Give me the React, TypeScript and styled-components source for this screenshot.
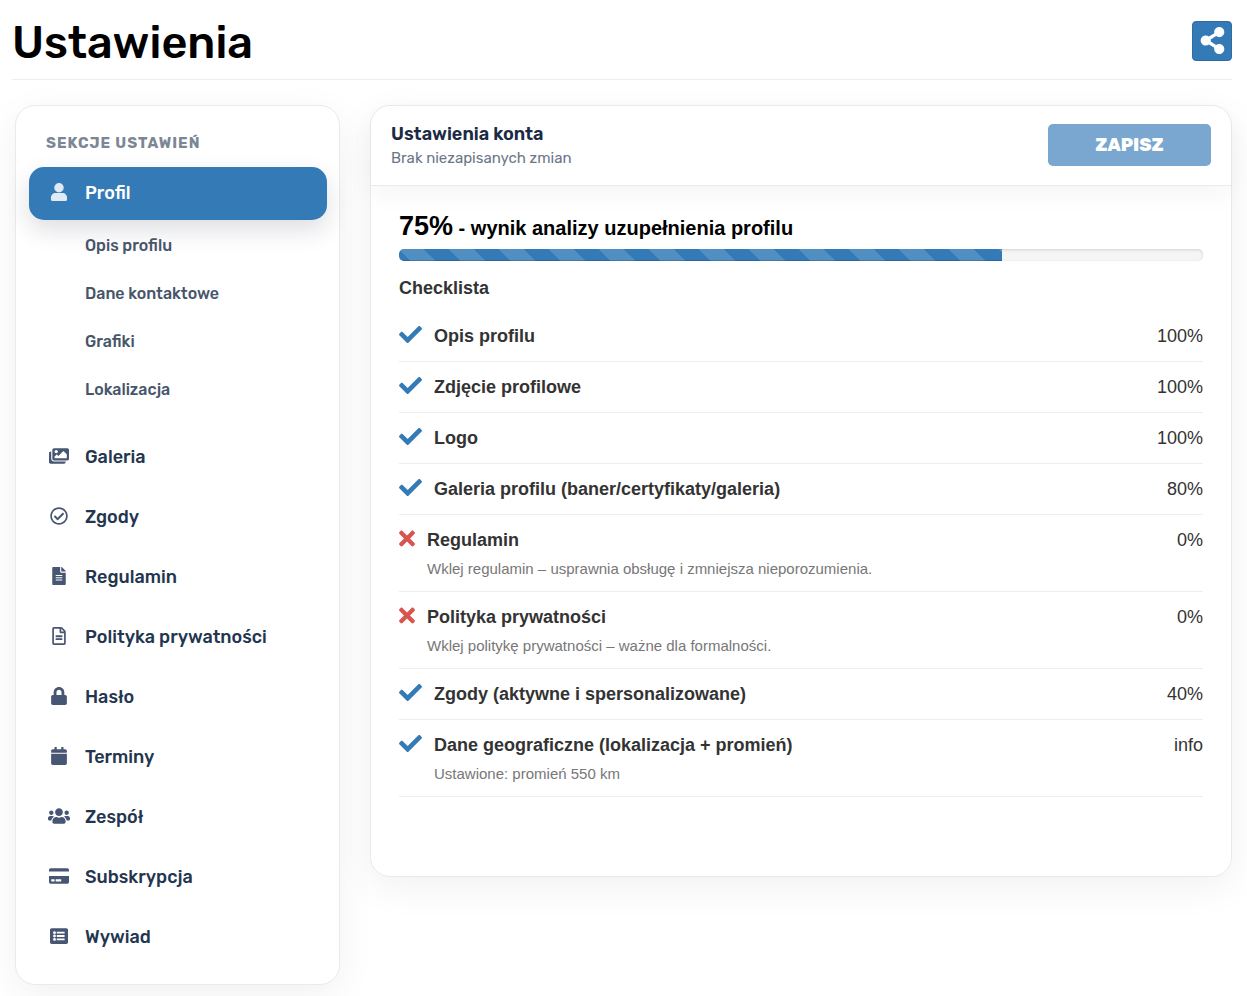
import React from "react";
import styled, { createGlobalStyle, css } from "styled-components";
import {
  FaImages, FaRegCheckCircle, FaFileAlt, FaRegFileAlt, FaLock,
  FaCalendar, FaUsers, FaCreditCard, FaListAlt, FaShareAlt, FaCheck, FaTimes,
} from "react-icons/fa";

const ui = `Rubik, Roboto, "Liberation Sans", sans-serif`;
const body = `"Liberation Sans", Arial, sans-serif`;
const blue = "#337ab7";

const GlobalStyle = createGlobalStyle`
  *, *::before, *::after { box-sizing: border-box; }
  body { margin: 0; background: #fff; color: #333; font-family: ${body}; font-size: 18px; }
  h1, h2, h3, h4, p, ul { margin: 0; padding: 0; }
  ul { list-style: none; }
`;

const Page = styled.div`
  padding: 0 15px 11px 12px;
`;

const PageHeader = styled.header`
  display: flex;
  align-items: center;
  justify-content: space-between;
  height: 80px;
  padding-top: 2px;
  border-bottom: 1px solid #eee;
`;

const Title = styled.h1`
  padding-top: 4px;
  font: 500 45px/52px ${ui};
  color: #000;
`;

const ShareButton = styled.button`
  display: flex;
  align-items: center;
  justify-content: center;
  width: 40px;
  height: 40px;
  padding: 0;
  border: 1px solid #2e6da4;
  border-radius: 4px;
  background: ${blue};
  color: #fff;
  font-size: 27px;
`;

const Columns = styled.div`
  display: grid;
  grid-template-columns: 325px minmax(0, 1fr);
  gap: 30px;
  align-items: start;
  padding: 25px 0 0 3px;
`;

const card = css`
  border: 1px solid #e8eaed;
  border-radius: 20px;
  background: #fff;
  box-shadow: 0 10px 38px rgba(15, 23, 42, 0.06);
`;

const Sidebar = styled.nav`
  ${card}
  padding: 25px 12px 20px 13px;
`;

const SidebarTitle = styled.h2`
  margin-bottom: 12px;
  padding-left: 17px;
  font: 700 15px/24px ${ui};
  letter-spacing: 1px;
  color: #7b8794;
`;

const NavList = styled.ul`
  display: flex;
  flex-direction: column;
  gap: 7px;
`;

const NavLink = styled.a<{ $active?: boolean }>`
  display: flex;
  align-items: center;
  gap: 15px;
  height: 53px;
  padding: 0 19px 2px;
  border-radius: 15px;
  font: 500 18px/24px ${ui};
  text-decoration: none;
  color: #24364f;
  ${({ $active }) =>
    $active &&
    css`
      background: ${blue};
      color: #fff;
      box-shadow: 0 10px 24px rgba(15, 23, 42, 0.14);
    `}
`;

const NavIcon = styled.span<{ $width: number; $active?: boolean }>`
  display: flex;
  justify-content: center;
  width: 22px;
  flex: none;
  padding-bottom: 1px;
  color: ${({ $active }) => ($active ? "#dfeaf5" : "#475672")};
  svg { height: 18px; width: ${({ $width }) => $width}px; flex: none; }
`;

const SubList = styled.ul`
  padding: 2px 0 10px 56px;
`;

const SubLink = styled.a`
  display: flex;
  align-items: center;
  height: 48px;
  font: 500 16px/24px ${ui};
  text-decoration: none;
  color: #475569;
`;

const Panel = styled.main`
  ${card}
`;

const PanelHeader = styled.div`
  display: flex;
  justify-content: space-between;
  align-items: center;
  gap: 20px;
  height: 80px;
  padding: 0 20px 2px;
  border-bottom: 1px solid #e8eaed;
  border-radius: 20px 20px 0 0;
  box-shadow: 0 10px 24px rgba(15, 23, 42, 0.04);
`;

const PanelHeading = styled.div`
  padding-top: 4px;
`;

const PanelTitle = styled.h2`
  font: 600 18px/24px ${ui};
  color: #1b2b45;
`;

const PanelStatus = styled.p`
  font: 400 15px/25px ${ui};
  color: #6b7787;
`;

const SaveButton = styled.button`
  width: 163px;
  height: 42px;
  border: 0;
  border-radius: 5px;
  background: #7aa7d0;
  color: #fff;
  font: 800 18px/24px ${ui};
`;

const PanelBody = styled.div`
  padding: 22px 28px 79px;
`;

const ScoreLine = styled.h3`
  font: 700 20px/36px ${body};
  color: #000;
`;

const Score = styled.span`
  font-size: 27px;
`;

const Track = styled.div`
  height: 12px;
  margin: 3px 0 16px;
  overflow: hidden;
  border-radius: 5px;
  background: #f5f5f5;
  box-shadow: inset 0 1px 3px rgba(0, 0, 0, 0.14);
`;

const Fill = styled.div`
  height: 100%;
  background: ${blue}
    linear-gradient(45deg, rgba(255, 255, 255, 0.15) 25%, transparent 25%, transparent 50%,
      rgba(255, 255, 255, 0.15) 50%, rgba(255, 255, 255, 0.15) 75%, transparent 75%, transparent)
    0 0 / 50px 50px;
  box-shadow: inset 0 -1px 0 rgba(0, 0, 0, 0.15);
`;

const ListTitle = styled.h3`
  margin-bottom: 12px;
  font: 700 18px/22px ${body};
`;

const Row = styled.li`
  display: flex;
  align-items: flex-start;
  padding: 12px 0;
  border-bottom: 1px solid #eee;
  line-height: 26px;
`;

const Mark = styled.span<{ $done: boolean }>`
  display: flex;
  flex: none;
  width: ${({ $done }) => ($done ? 35 : 28)}px;
  color: ${({ $done }) => ($done ? blue : "#d9534f")};
  svg { height: 23px; width: ${({ $done }) => ($done ? 23 : 16)}px; }
`;

const RowText = styled.div`
  flex: 1;
`;

const RowName = styled.h4`
  font: 700 18px/26px ${body};
`;

const Hint = styled.p`
  padding-top: 6px;
  font-size: 15px;
  line-height: 20px;
  color: #777;
`;

const PersonIcon = () => (
  <svg viewBox="0 0 18 19" fill="currentColor" aria-hidden="true">
    <circle cx="9" cy="5" r="5" />
    <path d="M5.5 10.6h7c2.8 0 5 2.2 5 5v1.8c0 .9-.7 1.6-1.6 1.6H2.1c-.9 0-1.6-.7-1.6-1.6v-1.8c0-2.8 2.2-5 5-5z" />
  </svg>
);

const nav = [
  { label: "Galeria", Icon: FaImages, width: 20 },
  { label: "Zgody", Icon: FaRegCheckCircle, width: 18 },
  { label: "Regulamin", Icon: FaFileAlt, width: 14 },
  { label: "Polityka prywatności", Icon: FaRegFileAlt, width: 14 },
  { label: "Hasło", Icon: FaLock, width: 16 },
  { label: "Terminy", Icon: FaCalendar, width: 16 },
  { label: "Zespół", Icon: FaUsers, width: 22 },
  { label: "Subskrypcja", Icon: FaCreditCard, width: 20 },
  { label: "Wywiad", Icon: FaListAlt, width: 18 },
];

const sections = ["Opis profilu", "Dane kontaktowe", "Grafiki", "Lokalizacja"];

const checklist = [
  { name: "Opis profilu", value: "100%", done: true },
  { name: "Zdjęcie profilowe", value: "100%", done: true },
  { name: "Logo", value: "100%", done: true },
  { name: "Galeria profilu (baner/certyfikaty/galeria)", value: "80%", done: true },
  { name: "Regulamin", value: "0%", done: false, hint: "Wklej regulamin – usprawnia obsługę i zmniejsza nieporozumienia." },
  { name: "Polityka prywatności", value: "0%", done: false, hint: "Wklej politykę prywatności – ważne dla formalności." },
  { name: "Zgody (aktywne i spersonalizowane)", value: "40%", done: true },
  { name: "Dane geograficzne (lokalizacja + promień)", value: "info", done: true, hint: "Ustawione: promień 550 km" },
];

const score = 75;

export default function App() {
  return (
    <Page>
      <GlobalStyle />
      <PageHeader>
        <Title>Ustawienia</Title>
        <ShareButton type="button" aria-label="Udostępnij"><FaShareAlt /></ShareButton>
      </PageHeader>
      <Columns>
        <Sidebar>
          <SidebarTitle>SEKCJE USTAWIEŃ</SidebarTitle>
          <NavList>
            <li>
              <NavLink href="#profil" $active>
                <NavIcon $active $width={18}><PersonIcon /></NavIcon>
                Profil
              </NavLink>
              <SubList>
                {sections.map((s) => (
                  <li key={s}><SubLink href="#profil">{s}</SubLink></li>
                ))}
              </SubList>
            </li>
            {nav.map(({ label, Icon, width }) => (
              <li key={label}>
                <NavLink href="#sekcja">
                  <NavIcon $width={width}><Icon /></NavIcon>
                  {label}
                </NavLink>
              </li>
            ))}
          </NavList>
        </Sidebar>
        <Panel>
          <PanelHeader>
            <PanelHeading>
              <PanelTitle>Ustawienia konta</PanelTitle>
              <PanelStatus>Brak niezapisanych zmian</PanelStatus>
            </PanelHeading>
            <SaveButton type="button">ZAPISZ</SaveButton>
          </PanelHeader>
          <PanelBody>
            <ScoreLine><Score>{score}%</Score> - wynik analizy uzupełnienia profilu</ScoreLine>
            <Track role="progressbar" aria-label="Uzupełnienie profilu" aria-valuenow={score} aria-valuemin={0} aria-valuemax={100}>
              <Fill style={{ width: `${score}%` }} />
            </Track>
            <ListTitle>Checklista</ListTitle>
            <ul>
              {checklist.map((c) => (
                <Row key={c.name}>
                  <Mark $done={c.done}>{c.done ? <FaCheck /> : <FaTimes />}</Mark>
                  <RowText>
                    <RowName>{c.name}</RowName>
                    {c.hint && <Hint>{c.hint}</Hint>}
                  </RowText>
                  <span>{c.value}</span>
                </Row>
              ))}
            </ul>
          </PanelBody>
        </Panel>
      </Columns>
    </Page>
  );
}
